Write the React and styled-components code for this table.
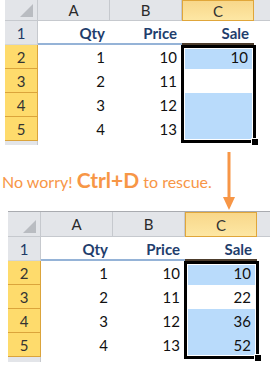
import React from "react";
import styled, { createGlobalStyle, css } from "styled-components";

const GlobalStyle = createGlobalStyle`
  html, body {
    margin: 0;
    padding: 0;
    background: #ffffff;
  }
  body {
    font-family: Lato, "Open Sans", "Liberation Sans", sans-serif;
    width: 270px;
    height: 368px;
    overflow: hidden;
  }
`;

const Page = styled.div`
  display: flex;
  flex-direction: column;
  width: 270px;
`;

const Sheet = styled.div`
  display: grid;
  grid-template-columns: 33px 72px 72px 72px 1fr;
  grid-template-rows: ${(p) => p.$headH}px repeat(5, 24px) ${(p) => p.$stripH}px;
  margin-left: ${(p) => p.$left}px;
  border-top: ${(p) => (p.$topLine ? "1px solid #a9abb0" : "none")};
  font-size: 15px;
  color: #111;
`;

/* every grid part sits at an explicit row / column so the selection frame can overlap cells */
const placed = css`
  grid-row: ${(p) => p.$r};
  grid-column: ${(p) => p.$c};
`;

const Corner = styled.div`
  ${placed}
  background: #e3e5e9;
  border-right: 1px solid #c6c9ce;
  border-bottom: 1px solid #c6c9ce;
  position: relative;
  &::after {
    content: "";
    position: absolute;
    right: 4px;
    bottom: 3px;
    width: 0;
    height: 0;
    border-left: 13px solid transparent;
    border-bottom: 13px solid #b9bcc1;
  }
`;

const ColHead = styled.div`
  ${placed}
  display: flex;
  align-items: center;
  justify-content: center;
  background: #e3e5e9;
  border-right: 1px solid #c6c9ce;
  border-bottom: 1px solid #c6c9ce;
  color: #2a2a2a;
  ${(p) =>
    p.$active &&
    css`
      background: linear-gradient(#f8d78a, #fde7a4);
      border: 1px solid #e0a63a;
      color: #333;
    `}
  ${(p) =>
    p.$blank &&
    css`
      border-right: none;
    `}
`;

const RowHead = styled.div`
  ${placed}
  display: flex;
  align-items: center;
  justify-content: center;
  background: #e3e5e9;
  border-right: 1px solid #c6c9ce;
  border-bottom: 1px solid #d3d6da;
  color: #1e3a66;
  ${(p) =>
    p.$active &&
    css`
      background: #fedb6c;
      border-right: 1px solid #dba43b;
      border-bottom: 1px solid #dba43b;
      color: #333;
    `}
`;

const Strip = styled.div`
  ${placed}
  background: #e3e5e9;
  border-right: 1px solid #c6c9ce;
`;

const Cell = styled.div`
  ${placed}
  display: flex;
  align-items: center;
  justify-content: flex-end;
  padding-right: ${(p) => (p.$inSel ? 6 : 5)}px;
  background: ${(p) => (p.$blue ? "#b9dbfb" : "#ffffff")};
  ${(p) =>
    p.$title &&
    css`
      font-weight: 700;
      color: #1f3e6d;
      border-bottom: 2px solid ${p.$dark ? "#4c3c2c" : "#95b3d7"};
      padding-top: 2px;
    `}
`;

const Selection = styled.div`
  grid-column: 4;
  grid-row: 3 / span 4;
  margin: 0 -2px -2px -1px;
  border: 3px solid #000;
  box-shadow: inset 0 0 0 1px #ffffff;
  position: relative;
  pointer-events: none;
  z-index: 1;
`;

const Handle = styled.span`
  position: absolute;
  right: -5px;
  bottom: -5px;
  width: 6px;
  height: 6px;
  background: #000;
  box-shadow: 0 0 0 1px #ffffff;
`;

const Middle = styled.div`
  display: flex;
  align-items: flex-start;
  height: 66px;
`;

const Note = styled.p`
  margin: 0;
  padding: 22px 0 0 2px;
  font-family: Lato, "Liberation Sans", sans-serif;
  font-size: 16px;
  color: #f79646;
  white-space: nowrap;
`;

const Keys = styled.b`
  font-size: 21px;
  font-weight: 700;
`;

const Arrow = styled.svg`
  margin: 7px 35px 0 auto;
  flex: none;
`;

const headers = ["A", "B", "C"];
const titles = ["Qty", "Price", "Sale"];
const qty = [1, 2, 3, 4];
const price = [10, 11, 12, 13];
const blueRows = [true, false, true, true];

function Worksheet({ left, headH, stripH, topLine, sales }) {
  return (
    <Sheet $left={left} $headH={headH} $stripH={stripH} $topLine={topLine}>
      <Corner $r={1} $c={1} />
      {headers.map((h, i) => (
        <ColHead key={h} $r={1} $c={i + 2} $active={h === "C"}>
          {h}
        </ColHead>
      ))}
      <ColHead $r={1} $c={5} $blank />

      <RowHead $r={2} $c={1}>1</RowHead>
      {titles.map((t, i) => (
        <Cell key={t} $r={2} $c={i + 2} $title $dark={t === "Sale"}>
          {t}
        </Cell>
      ))}
      <Cell $r={2} $c={5} />

      {qty.map((q, i) => (
        <React.Fragment key={q}>
          <RowHead $r={i + 3} $c={1} $active>
            {i + 2}
          </RowHead>
          <Cell $r={i + 3} $c={2}>{q}</Cell>
          <Cell $r={i + 3} $c={3}>{price[i]}</Cell>
          <Cell $r={i + 3} $c={4} $inSel $blue={blueRows[i]}>
            {sales[i]}
          </Cell>
          <Cell $r={i + 3} $c={5} />
        </React.Fragment>
      ))}

      <Strip $r={7} $c={1} />

      <Selection>
        <Handle />
      </Selection>
    </Sheet>
  );
}

export default function App() {
  return (
    <>
      <GlobalStyle />
      <Page>
        <Worksheet left={5} headH={21} stripH={4} sales={[10, "", "", ""]} />
        <Middle>
          <Note>
            No worry! <Keys>Ctrl+D</Keys> to rescue.
          </Note>
          <Arrow width="12" height="58" viewBox="0 0 12 58">
            <rect x="4.5" y="0" width="3" height="46" fill="#f79646" />
            <polygon points="0,45 12,45 6,58" fill="#f79646" />
          </Arrow>
        </Middle>
        <Worksheet left={8} headH={25} stripH={5} topLine sales={[10, 22, 36, 52]} />
      </Page>
    </>
  );
}
